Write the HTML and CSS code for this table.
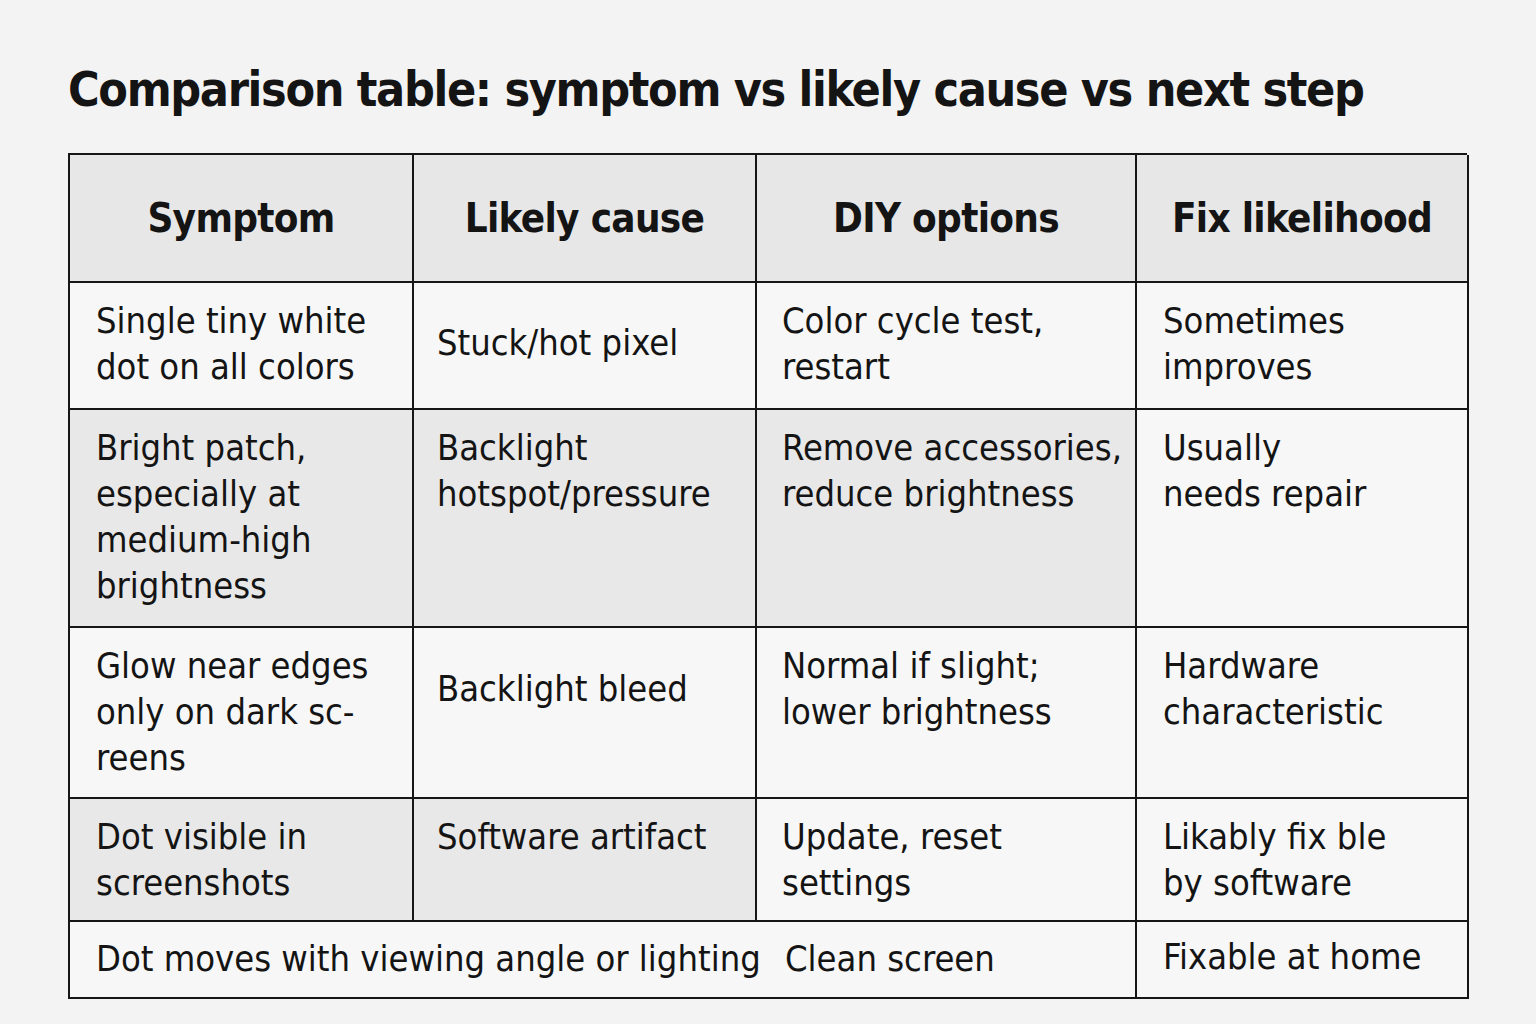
FILE: index.html
```html
<!DOCTYPE html>
<html lang="en">
<head>
<meta charset="utf-8">
<title>Comparison table</title>
<link rel="stylesheet" href="styles.css">
</head>
<body>
<main class="page">
  <h1 class="title">Comparison table: symptom vs likely cause vs next step</h1>
  <div class="table">
    <div class="cell head">Symptom</div>
    <div class="cell head">Likely cause</div>
    <div class="cell head">DIY options</div>
    <div class="cell head">Fix likelihood</div>

    <div class="cell c1">Single tiny white<br>dot on all colors</div>
    <div class="cell c2 middle">Stuck/hot pixel</div>
    <div class="cell c3">Color cycle test,<br>restart</div>
    <div class="cell c4">Sometimes<br>improves</div>

    <div class="cell c1 shade">Bright patch,<br>especially at<br>medium-high<br>brightness</div>
    <div class="cell c2 shade">Backlight<br>hotspot/pressure</div>
    <div class="cell c3 shade">Remove accessories,<br>reduce brightness</div>
    <div class="cell c4">Usually<br>needs repair</div>

    <div class="cell c1">Glow near edges<br>only on dark sc-<br>reens</div>
    <div class="cell c2 offset">Backlight bleed</div>
    <div class="cell c3">Normal if slight;<br>lower brightness</div>
    <div class="cell c4">Hardware<br>characteristic</div>

    <div class="cell c1 shade">Dot visible in<br>screenshots</div>
    <div class="cell c2 shade">Software artifact</div>
    <div class="cell c3">Update, reset<br>settings</div>
    <div class="cell c4">Likably fix ble<br>by software</div>

    <div class="cell c1 span3">
      <span class="wide">Dot moves with viewing angle or lighting</span>
      <span class="inner">Clean screen</span>
    </div>
    <div class="cell c4 middle">Fixable at home</div>
  </div>
</main>
</body>
</html>
```

FILE: styles.css
```css
html, body {
  margin: 0;
  padding: 0;
  background: #f3f3f3;
}

.page {
  padding: 59px 0 0 68px;
  font-family: "DejaVu Sans Condensed", "Liberation Sans Narrow", Roboto, sans-serif;
  color: #141414;
}

.title {
  margin: 0;
  font-size: 48px;
  line-height: 60px;
  font-weight: 700;
  letter-spacing: -1.35px;
}

.table {
  margin-top: 34px;
  width: 1399px;
  display: grid;
  grid-template-columns: 344px 343px 380px 332px;
  grid-template-rows: 128px 127px 218px 171px 123px 77px;
  border-top: 2.5px solid #161616;
  border-left: 2.5px solid #161616;
  box-sizing: border-box;
}

.cell {
  box-sizing: border-box;
  border-right: 2.5px solid #161616;
  border-bottom: 2.5px solid #161616;
  background: #f7f7f7;
  padding: 15px 8px 0 26px;
  font-size: 36px;
  line-height: 46px;
}

.c1 { padding-left: 26px; }
.c2 { padding-left: 23px; }
.c3 { padding-left: 25px; }
.c4 { padding-left: 26px; }

.head {
  background: #e7e7e7;
  font-weight: 700;
  font-size: 40px;
  letter-spacing: -0.7px;
  display: flex;
  align-items: center;
  justify-content: center;
  padding: 0;
}

.shade {
  background: #e8e8e8;
}

.middle {
  display: flex;
  align-items: center;
  padding-top: 0;
  padding-bottom: 6px;
}

.offset {
  padding-top: 38px;
}

.span3 {
  grid-column: 1 / 4;
  display: grid;
  grid-template-columns: 689px 1fr;
  align-items: center;
  padding-top: 0;
  padding-bottom: 2px;
}

.wide {
  white-space: nowrap;
}

.inner {
  padding-left: 0;
}
```
